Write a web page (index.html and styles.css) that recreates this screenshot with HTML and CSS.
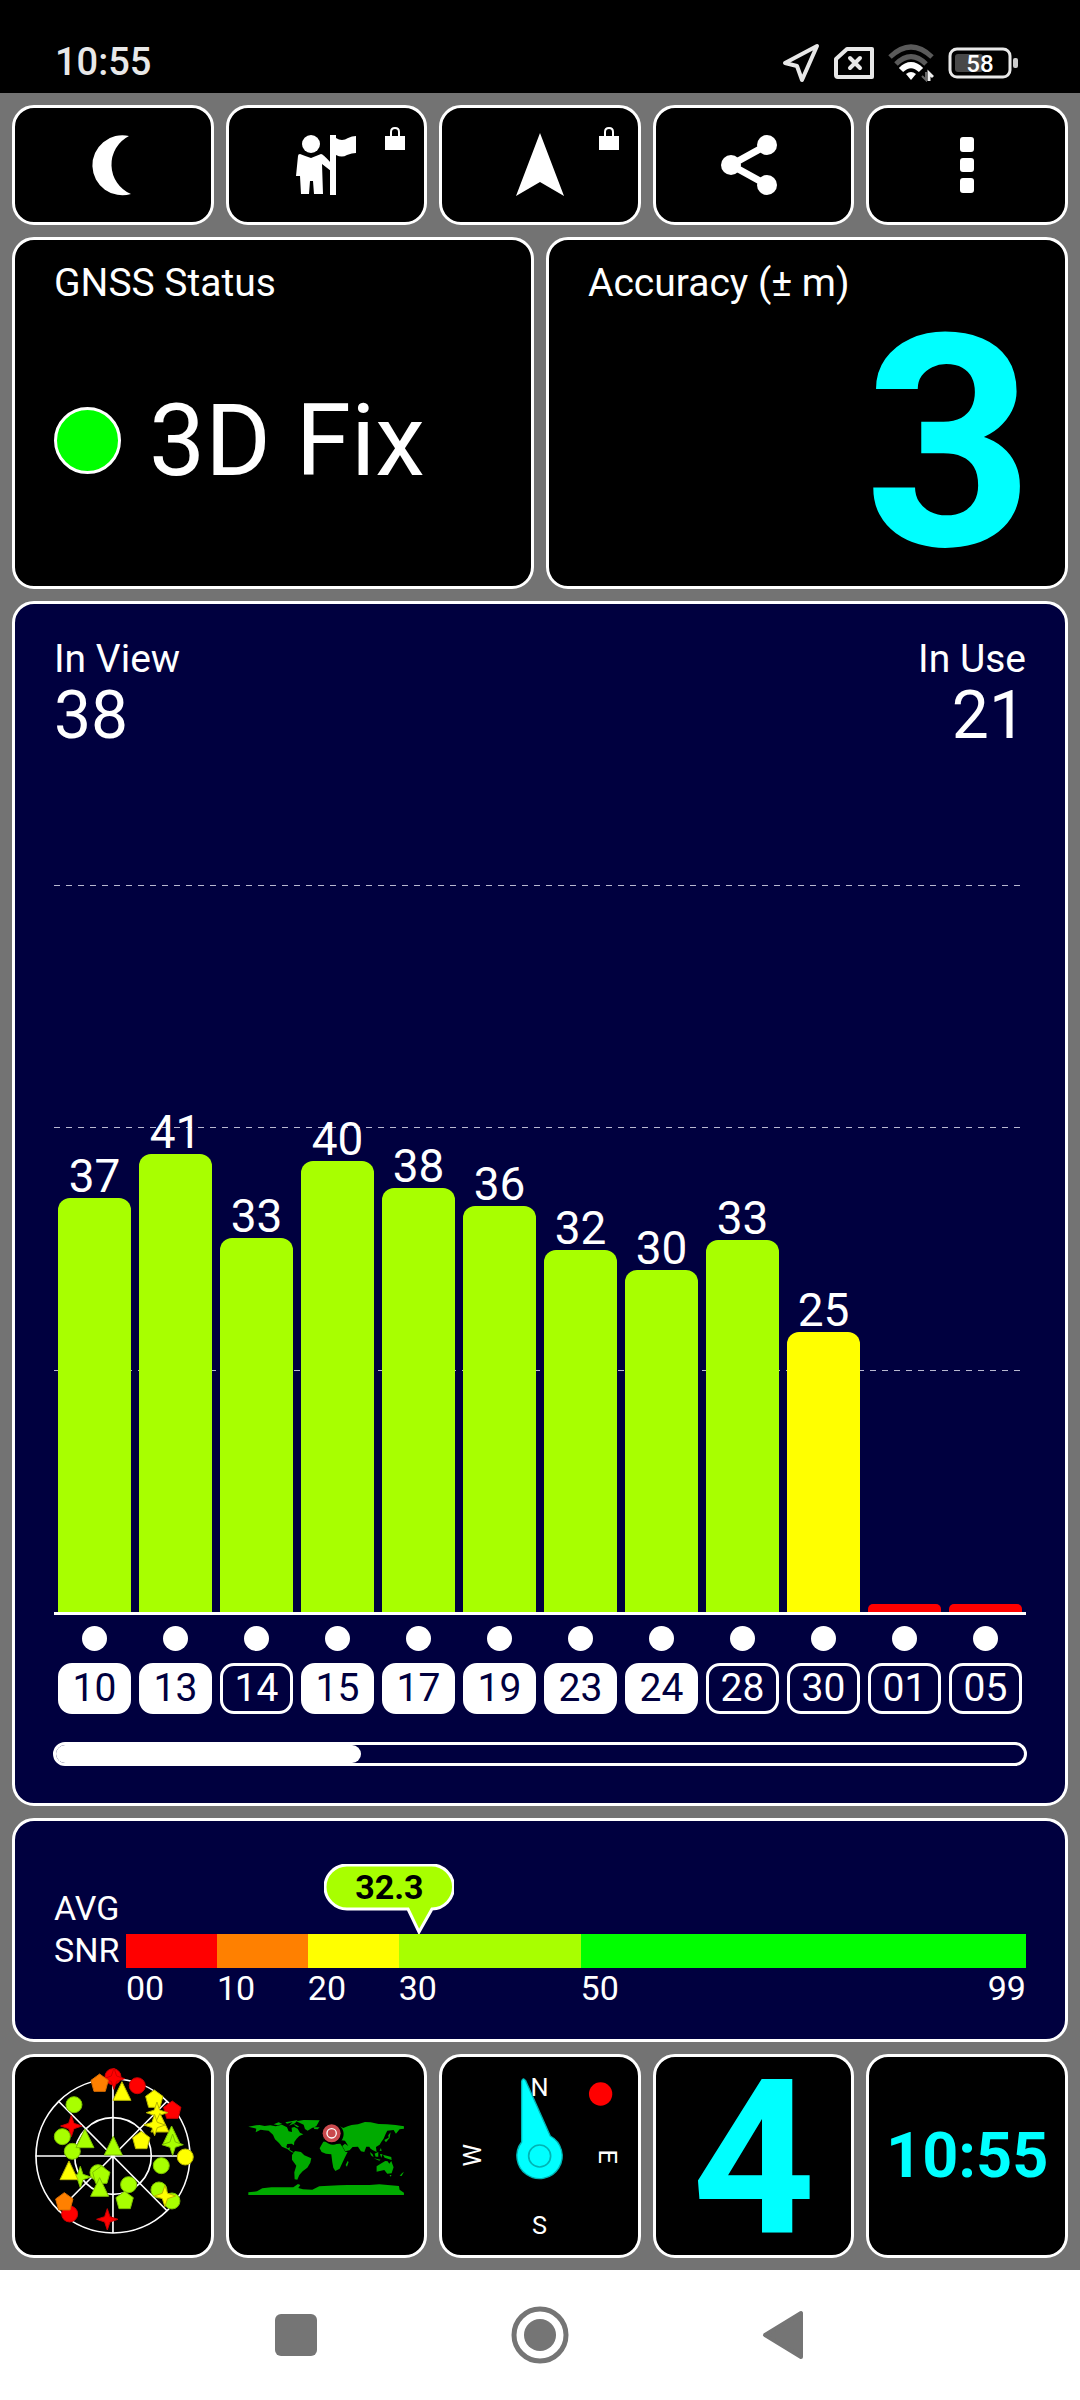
FILE: index.html
```html
<!DOCTYPE html>
<html lang="en">
<head>
<meta charset="utf-8">
<meta name="viewport" content="width=device-width, initial-scale=1">
<title>GNSS Status</title>
<link rel="stylesheet" href="styles.css">
</head>
<body>
<header class="statusbar">
  <time class="statusbar-time">10:55</time>
  <div class="statusbar-icons">
    <svg width="38" height="40" viewBox="0 0 38 40" fill="none" stroke="#e8e8e8" stroke-width="4" stroke-linejoin="round"><path d="M35 3 L20 37 L15 23 L3 20 Z"/></svg>
    <svg width="40" height="34" viewBox="0 0 40 34" fill="none" stroke="#e8e8e8" stroke-width="4" stroke-linejoin="round" stroke-linecap="round"><path d="M13 3 H38 V31 H4 Q2 31 2 29 V13 Z" /><path d="M16 12 L26 22 M26 12 L16 22"/></svg>
    <svg width="46" height="38" viewBox="0 0 46 38" fill="none"><path d="M2 13 Q23 -7 44 13" stroke="#5a5a5a" stroke-width="5"/><path d="M8 20 Q23 5 38 20" stroke="#5a5a5a" stroke-width="5"/><path d="M13 26 Q23 16 33 26" stroke="#fff" stroke-width="6"/><path d="M23 36 L18 30 Q23 26 28 30 Z" fill="#fff"/><path d="M38 28 V36 L34 32" stroke="#666" stroke-width="2"/><path d="M41 37 V29 L45 33" stroke="#eee" stroke-width="3"/></svg>
    <svg width="70" height="32" viewBox="0 0 70 32"><rect x="2" y="2" width="60" height="28" rx="7" fill="none" stroke="#e8e8e8" stroke-width="3"/><rect x="7" y="7" width="28" height="18" rx="3" fill="#484848"/><rect x="65" y="11" width="5" height="10" rx="2" fill="#ccc"/><text class="battery-text" x="32" y="25" text-anchor="middle">58</text></svg>
  </div>
</header>

<main class="dashboard">
  <nav class="tiles toolbar" aria-label="Tools">
    <button class="panel tool" type="button" aria-label="Night mode"><svg class="tool-icon" viewBox="0 0 60 60"><path d="M46 1 A30 30 0 1 0 48 59 A32 32 0 0 1 46 1 Z"/></svg></button>
    <button class="panel tool" type="button" aria-label="Waypoints (locked)">
      <svg class="tool-icon" viewBox="0 0 60 60"><circle cx="15" cy="9" r="9"/><path d="M34 0 H40 V60 H34 Z"/><path d="M40 3 Q46 7 52 3 Q56 1 60 1 V18 Q56 18 51 20 Q46 23 40 20 Z"/><path d="M4 19 Q9 21 15 23 Q20 21 25 19 Q27 19 35 28 V36 L26 29 L27 59 H18 L17 46 H14 L13 59 H5 L4 41 H0 L2 21 Q2 19 4 19 Z"/></svg>
      <svg class="lock" viewBox="0 0 20 23"><path d="M0 9 H20 V23 H0 Z"/><path class="lock-bow" d="M6 10 V5 Q6 1 10 1 Q14 1 14 5 V10"/></svg>
    </button>
    <button class="panel tool" type="button" aria-label="Navigate (locked)">
      <svg class="tool-icon" viewBox="0 0 60 60"><path d="M30 -2 L54 61 L30 47 L6 61 Z"/></svg>
      <svg class="lock" viewBox="0 0 20 23"><path d="M0 9 H20 V23 H0 Z"/><path class="lock-bow" d="M6 10 V5 Q6 1 10 1 Q14 1 14 5 V10"/></svg>
    </button>
    <button class="panel tool" type="button" aria-label="Share"><svg class="tool-icon" viewBox="0 0 60 60"><path d="M43 10 L7 30 L43 50" fill="none" stroke="#fff" stroke-width="7"/><circle cx="43" cy="10" r="10"/><circle cx="7" cy="30" r="10"/><circle cx="43" cy="50" r="10"/></svg></button>
    <button class="panel tool" type="button" aria-label="Menu"><svg class="tool-icon" viewBox="0 0 60 60"><rect x="23" y="2" width="14" height="15" rx="3"/><rect x="23" y="23" width="14" height="14" rx="3"/><rect x="23" y="43" width="14" height="15" rx="3"/></svg></button>
  </nav>

  <div class="summary">
    <section class="panel summary-card">
      <h2 class="label">GNSS Status</h2>
      <div class="fix"><span class="fix-light"></span><span>3D Fix</span></div>
    </section>
    <section class="panel summary-card">
      <h2 class="label">Accuracy (± m)</h2>
      <div class="accuracy">3</div>
    </section>
  </div>

  <section class="panel signal">
    <div class="counts">
      <dl class="count"><dt class="label">In View</dt><dd>38</dd></dl>
      <dl class="count count-right"><dt class="label">In Use</dt><dd>21</dd></dl>
    </div>
    <div class="plot">
      <div class="gridlines"><i></i><i></i><i></i></div>
      <div class="bars">
        <div class="bar-slot"><span>37</span><div class="bar" style="height:57%"></div></div>
        <div class="bar-slot"><span>41</span><div class="bar" style="height:63%"></div></div>
        <div class="bar-slot"><span>33</span><div class="bar" style="height:51.5%"></div></div>
        <div class="bar-slot"><span>40</span><div class="bar" style="height:62.1%"></div></div>
        <div class="bar-slot"><span>38</span><div class="bar" style="height:58.3%"></div></div>
        <div class="bar-slot"><span>36</span><div class="bar" style="height:55.9%"></div></div>
        <div class="bar-slot"><span>32</span><div class="bar" style="height:49.8%"></div></div>
        <div class="bar-slot"><span>30</span><div class="bar" style="height:47.1%"></div></div>
        <div class="bar-slot"><span>33</span><div class="bar" style="height:51.2%"></div></div>
        <div class="bar-slot"><span>25</span><div class="bar bar-yellow" style="height:38.5%"></div></div>
        <div class="bar-slot"><div class="bar bar-red" style="height:1.1%"></div></div>
        <div class="bar-slot"><div class="bar bar-red" style="height:1.1%"></div></div>
      </div>
    </div>
    <div class="sats">
      <div class="sat"><i></i><span class="used">10</span></div>
      <div class="sat"><i></i><span class="used">13</span></div>
      <div class="sat"><i></i><span>14</span></div>
      <div class="sat"><i></i><span class="used">15</span></div>
      <div class="sat"><i></i><span class="used">17</span></div>
      <div class="sat"><i></i><span class="used">19</span></div>
      <div class="sat"><i></i><span class="used">23</span></div>
      <div class="sat"><i></i><span class="used">24</span></div>
      <div class="sat"><i></i><span>28</span></div>
      <div class="sat"><i></i><span>30</span></div>
      <div class="sat"><i></i><span>01</span></div>
      <div class="sat"><i></i><span>05</span></div>
    </div>
    <div class="scroll"><div class="scroll-thumb" style="width:31.5%"></div></div>
  </section>

  <section class="panel snr">
    <div class="snr-name">AVG<br>SNR</div>
    <div class="snr-scale">
      <div class="callout">
        <svg width="130" height="70" viewBox="0 0 130 70"><path d="M23 1 H107 A22 22 0 0 1 108 45 L95 68 L84 45 H23 A22 22 0 0 1 23 1 Z" fill="#a8ff00" stroke="#fff" stroke-width="3"/></svg>
        <span>32.3</span>
      </div>
      <div class="bands"><i class="band-red"></i><i class="band-orange"></i><i class="band-yellow"></i><i class="band-lime"></i><i class="band-green"></i></div>
      <div class="ticks"><span>00</span><span>10</span><span>20</span><span>30</span><span class="ticks-end"><span>50</span><span>99</span></span></div>
    </div>
  </section>

  <nav class="tiles pages" aria-label="Pages">
    <button class="panel page" type="button" aria-label="Sky view">
      <svg class="picture" viewBox="15 21 587 594">
        <defs>
          <circle id="c" r="24"/>
          <path id="p" d="M0 -27 L26 -8 L17 25 H-17 L-26 -8 Z"/>
          <path id="t" d="M0 -32 L27 24 H-27 Z"/>
          <path id="s" d="M0 -32 L8 -8 L32 0 L8 8 L0 32 L-8 8 L-32 0 L-8 -8 Z"/>
        </defs>
        <g fill="none" stroke="#fff" stroke-width="5"><circle cx="309" cy="318" r="231"/><circle cx="309" cy="318" r="115"/><path d="M77 318 H540 M309 87 V549 M145 153 L472 483 M472 153 L145 483"/></g>
        <g fill="#f00" stroke="#c00" stroke-width="3"><use href="#c" x="309" y="80"/><use href="#s" x="312" y="86"/><use href="#c" x="382" y="107"/><use href="#p" x="487" y="180"/><use href="#s" x="184" y="228"/><use href="#c" x="179" y="492"/><use href="#s" x="292" y="508"/></g>
        <g fill="#ff8000" stroke="#d86c00" stroke-width="3"><use href="#p" x="269" y="99"/><use href="#p" x="163" y="455"/></g>
        <g fill="#a8ff00" stroke="#7cc000" stroke-width="3"><use href="#c" x="192" y="164"/><use href="#c" x="157" y="260"/><use href="#c" x="187" y="304"/><use href="#t" x="225" y="269"/><use href="#t" x="310" y="291"/><use href="#t" x="485" y="260"/><use href="#s" x="488" y="284"/><use href="#c" x="454" y="347"/><use href="#c" x="264" y="368"/><use href="#p" x="274" y="375"/><use href="#t" x="269" y="415"/><use href="#s" x="211" y="381"/><use href="#c" x="356" y="404"/><use href="#p" x="344" y="451"/><use href="#c" x="447" y="420"/><use href="#c" x="486" y="453"/></g>
        <g fill="#ff0" stroke="#b8b800" stroke-width="3"><use href="#t" x="336" y="127"/><use href="#p" x="433" y="147"/><use href="#s" x="441" y="188"/><use href="#t" x="450" y="222"/><use href="#s" x="434" y="225"/><use href="#p" x="394" y="271"/><use href="#c" x="526" y="321"/><use href="#t" x="177" y="365"/><use href="#s" x="465" y="438"/></g>
      </svg>
    </button>
    <button class="panel page" type="button" aria-label="World map">
      <svg class="picture" viewBox="26 21 587 594">
        <g fill="#0a0">
          <path d="M84 230 L107 226 L118 225 L133 228 L150 226 L166 229 L185 224 L200 232 L205 244 L215 246 L214 233 L222 231 L232 236 L239 248 L249 253 L237 258 L229 266 L222 276 L221 286 L214 281 L201 282 L198 290 L202 295 L209 292 L208 299 L214 303 L223 308 L214 307 L201 297 L185 290 L176 279 L164 268 L158 254 L145 242 L131 241 L121 239 L106 247 L108 236 Z"/>
          <path d="M160 223 L175 217 L186 222 L172 226 Z M195 217 L232 210 L224 220 L206 227 L217 216 L200 221 Z M218 222 L229 225 L237 231 L231 232 Z"/>
          <path d="M228 214 L250 210 L298 211 L288 229 L275 234 L262 242 L254 237 L250 224 Z M280 232 H298 L292 238 L282 237 Z"/>
          <path d="M224 303 L242 306 L252 316 L273 325 L270 338 L261 353 L247 364 L237 375 L231 389 L223 388 L222 367 L228 347 L215 329 L215 315 Z"/>
          <path d="M309 275 L328 274 L344 282 L360 281 L367 292 L375 305 L382 306 L373 324 L366 339 L358 356 L345 363 L339 353 L336 337 L333 313 L317 311 L304 306 L298 295 Z M382 333 L385 336 L380 350 L376 345 Z"/>
          <path d="M309 266 L310 252 L323 246 L334 226 L351 225 L369 234 L382 229 L394 225 L413 223 L434 216 L451 217 L475 222 L500 223 L526 225 L551 229 V236 L538 238 L527 251 L520 240 L501 242 L496 252 L490 266 L483 276 L478 284 L467 291 L469 306 L458 301 L451 296 L447 290 L438 290 L432 306 L422 304 L413 290 L397 291 L388 301 L375 304 L366 288 L374 281 L384 288 L374 272 L358 270 L342 270 L324 263 L317 272 Z"/>
          <path d="M492 270 L505 263 L504 256 L511 247 L508 264 L497 277 Z M449 306 L457 313 L460 322 L452 316 Z M463 311 L474 306 L474 320 L466 320 Z M478 302 L482 294 L484 303 Z M479 312 L487 313 L483 323 Z M488 314 L513 321 L514 330 L493 323 Z M460 325 L481 329 L477 332 Z"/>
          <path d="M469 349 L481 341 L495 333 L502 334 L507 341 L513 333 L520 352 L514 370 L501 371 L492 360 L469 365 Z M545 370 L551 365 L544 378 L538 377 Z M508 375 L514 375 L510 380 Z"/>
          <path d="M84 427 L110 424 L126 415 L153 412 L219 412 L233 402 L240 405 L234 414 L248 418 L276 419 L297 409 L356 406 L382 405 L448 405 L477 403 L536 408 L538 419 L551 428 V435 H84 Z"/>
        </g>
        <circle cx="338" cy="252" r="32" fill="#000"/><circle cx="334" cy="250" r="27" fill="#c9494d"/><circle cx="334" cy="250" r="14" fill="none" stroke="#fff" stroke-width="4"/>
      </svg>
    </button>
    <button class="panel page" type="button" aria-label="Compass">
      <svg class="picture" viewBox="37 21 587 594">
        <g fill="#fff" class="compass-text" text-anchor="middle"><text x="330" y="137">N</text><text x="330" y="551">S</text><text transform="translate(154 316) rotate(-90)">W</text><text transform="translate(508 320) rotate(90)">E</text></g>
        <circle cx="513" cy="132" r="35" fill="#f00"/>
        <path d="M276 276 L276 94 Q279 80 288 92 L362 258 A68 68 0 1 1 276 276 Z" fill="#0ff" stroke="#00b4b4" stroke-width="4"/>
        <circle cx="330" cy="318" r="33" fill="none" stroke="#00b4b4" stroke-width="5"/>
      </svg>
    </button>
    <button class="panel page page-number" type="button">4</button>
    <button class="panel page page-time" type="button">10:55</button>
  </nav>
</main>

<nav class="navbar" aria-label="System">
  <button type="button" aria-label="Recent apps"><svg width="58" height="58" viewBox="0 0 58 58"><rect x="8" y="8" width="42" height="42" rx="6" fill="#757575"/></svg></button>
  <button type="button" aria-label="Home"><svg width="58" height="58" viewBox="0 0 58 58"><circle cx="29" cy="29" r="26" fill="none" stroke="#757575" stroke-width="5"/><circle cx="29" cy="29" r="16" fill="#757575"/></svg></button>
  <button type="button" aria-label="Back"><svg width="58" height="58" viewBox="0 0 58 58"><path d="M46 7 V51 L10 29 Z" fill="#757575" stroke="#757575" stroke-width="4" stroke-linejoin="round"/></svg></button>
</nav>
</body>
</html>
```
FILE: styles.css
```css
* {
  box-sizing: border-box;
}

body {
  margin: 0;
  min-height: 100vh;
  display: flex;
  flex-direction: column;
  background: #737373;
  color: #fff;
  font-family: Roboto, "Noto Sans", sans-serif;
}

h2,
dl,
dd {
  margin: 0;
}

button {
  margin: 0;
  padding: 0;
  border: 0;
  background: none;
  color: inherit;
  font: inherit;
}

svg {
  display: block;
}

/* System status bar */
.statusbar {
  display: flex;
  justify-content: space-between;
  align-items: center;
  padding: 40px 62px 8px 55px;
  background: #000;
}

.statusbar-time {
  color: #e8e8e8;
  font-size: 38px;
  font-weight: 500;
  line-height: 45px;
}

.statusbar-icons {
  display: flex;
  align-items: center;
  gap: 14px;
}

.battery-text {
  fill: #fff;
  font-size: 24px;
  font-weight: 500;
}

/* Panels */
.dashboard {
  flex: 1;
  display: flex;
  flex-direction: column;
  gap: 12px;
  padding: 12px;
}

.panel {
  border: 3px solid #fff;
  border-radius: 22px;
  background: #000;
}

.tiles {
  display: grid;
  grid-template-columns: repeat(5, 1fr);
  gap: 12px;
}

.tool {
  position: relative;
  display: flex;
  justify-content: center;
  align-items: center;
  height: 120px;
}

.tool-icon {
  width: 60px;
  height: 60px;
  fill: #fff;
  overflow: visible;
}

.lock {
  position: absolute;
  top: 19px;
  right: 19px;
  width: 20px;
  height: 23px;
  fill: #fff;
}

.lock-bow {
  fill: none;
  stroke: #fff;
  stroke-width: 2;
}

.label {
  font-size: 39px;
  font-weight: 400;
  line-height: 44px;
}

/* Fix and accuracy */
.summary {
  display: grid;
  grid-template-columns: 1fr 1fr;
  gap: 12px;
}

.summary-card {
  display: flex;
  flex-direction: column;
  min-height: 352px;
  padding: 21px 39px 10px;
}

.fix {
  flex: 1;
  display: flex;
  align-items: center;
  gap: 28px;
  font-size: 100px;
  line-height: 100px;
}

.fix-light {
  width: 67px;
  height: 67px;
  border: 3px solid #fff;
  border-radius: 50%;
  background: #0f0;
}

.accuracy {
  flex: 1;
  display: flex;
  justify-content: flex-end;
  align-items: center;
  margin-right: -8px;
  padding-top: 6px;
  color: #0ff;
  font-size: 296px;
  font-weight: 700;
  line-height: 240px;
}

/* Signal chart */
.signal {
  flex: 1;
  display: flex;
  flex-direction: column;
  padding: 33px 39px 37px;
  background: #00003f;
}

.counts {
  display: flex;
  justify-content: space-between;
}

.count dd {
  font-size: 66px;
  line-height: 70px;
}

.count-right {
  text-align: right;
}

.plot {
  flex: 1;
  display: grid;
  min-height: 400px;
  margin-top: 134px;
  border-bottom: 3px solid #fff;
}

.gridlines,
.bars {
  grid-area: 1 / 1;
}

.gridlines {
  display: flex;
  flex-direction: column;
}

.gridlines i {
  flex: 1;
  background: repeating-linear-gradient(90deg, #b8b8d0 0 6px, transparent 6px 12px) top / 100% 1px no-repeat;
}

.bars,
.sats {
  display: grid;
  grid-template-columns: repeat(12, 1fr);
  gap: 8px;
  padding: 0 4px;
}

.bar-slot {
  display: flex;
  flex-direction: column;
  justify-content: flex-end;
  font-size: 46px;
  line-height: 44px;
  text-align: center;
}

.bar {
  flex: none;
  border-radius: 12px 12px 0 0;
  background: #a8ff00;
}

.bar-yellow {
  background: #ff0;
}

.bar-red {
  border-radius: 5px 5px 0 0;
  background: #f00;
}

.sats {
  margin-top: 11px;
}

.sat {
  display: flex;
  flex-direction: column;
  align-items: center;
  gap: 12px;
}

.sat i {
  width: 25px;
  height: 25px;
  border-radius: 50%;
  background: #fff;
}

.sat span {
  width: 100%;
  border: 3px solid #fff;
  border-radius: 14px;
  font-size: 39px;
  line-height: 45px;
  text-align: center;
}

.sat .used {
  background: #fff;
  color: #00003f;
}

.scroll {
  height: 24px;
  margin: 28px -1px 0;
  border: 3px solid #fff;
  border-radius: 12px;
}

.scroll-thumb {
  height: 100%;
  border-radius: 9px;
  background: #fff;
}

/* Average SNR */
.snr {
  display: grid;
  grid-template-columns: 72px 1fr;
  padding: 43px 39px 31px;
  background: #00003f;
  font-size: 34px;
}

.snr-name {
  padding-top: 23px;
  line-height: 42px;
}

.callout {
  display: grid;
  width: 130px;
  margin-left: calc(32.6% - 95px);
  color: #000;
  font-weight: 700;
  line-height: 46px;
  text-align: center;
}

.callout > * {
  grid-area: 1 / 1;
}

.bands,
.ticks {
  display: grid;
  grid-template-columns: 10fr 10fr 10fr 20fr 49fr;
}

.bands {
  height: 34px;
}

.band-red {
  background: #f00;
}

.band-orange {
  background: #ff8000;
}

.band-yellow {
  background: #ff0;
}

.band-lime {
  background: #a8ff00;
}

.band-green {
  background: #0f0;
}

.ticks {
  line-height: 40px;
}

.ticks-end {
  display: flex;
  justify-content: space-between;
}

/* Page tiles */
.page {
  display: flex;
  justify-content: center;
  align-items: center;
  height: 204px;
}

.picture {
  width: 100%;
  height: 100%;
}

.compass-text {
  font-size: 76px;
}

.page-number,
.page-time {
  color: #0ff;
  font-weight: 700;
}

.page-number {
  padding-top: 6px;
  font-size: 215px;
  line-height: 180px;
}

.page-time {
  font-size: 63px;
  line-height: 64px;
}

/* System navigation */
.navbar {
  display: flex;
  justify-content: center;
  gap: 186px;
  padding: 36px 0;
  background: #fff;
}
```
